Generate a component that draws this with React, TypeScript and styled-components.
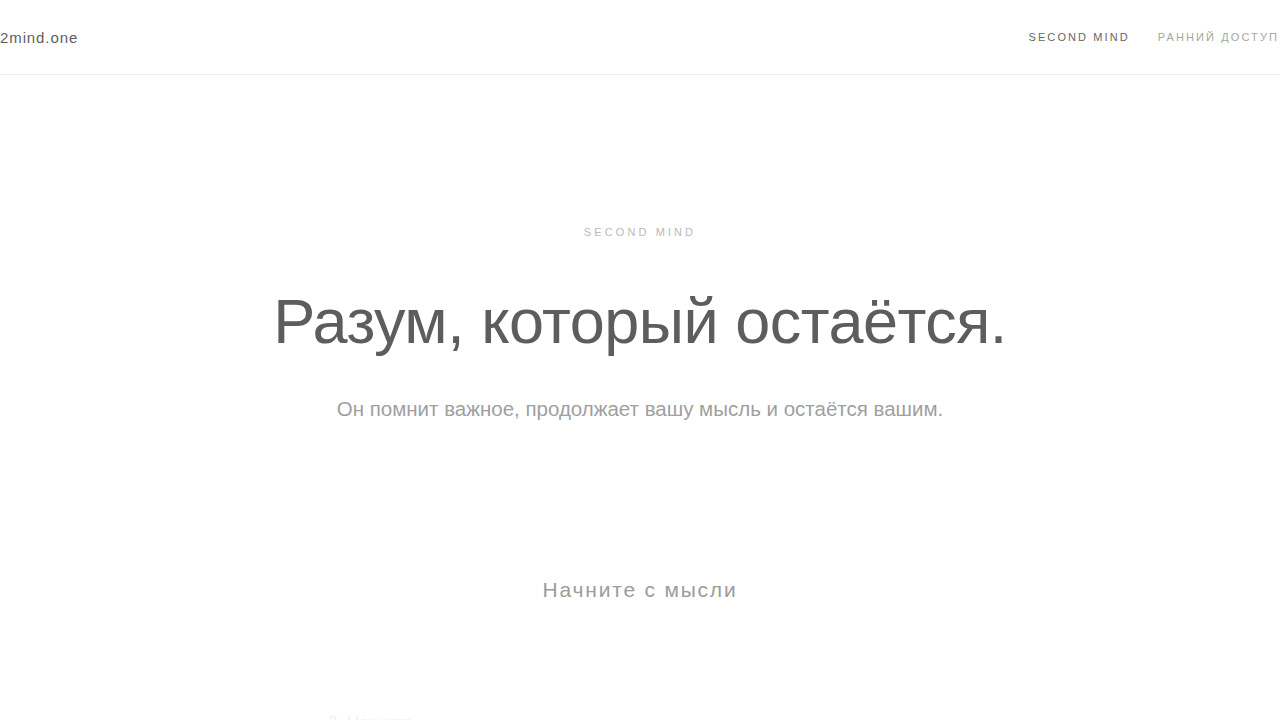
import React from "react";
import styled, { createGlobalStyle } from "styled-components";

const GlobalStyle = createGlobalStyle`
  html, body {
    margin: 0;
    padding: 0;
    background: #ffffff;
    font-family: "Liberation Sans", Arial, sans-serif;
    -webkit-font-smoothing: antialiased;
  }
  #root {
    min-height: 100vh;
  }
`;

const navItems = [
  { label: "SECOND MIND", muted: false },
  { label: "РАННИЙ ДОСТУП", muted: true },
];

const App: React.FC = () => {
  return (
    <>
      <GlobalStyle />
      <Page>
        <Header>
          <Logo href="#">2mind.one</Logo>
          <Nav>
            {navItems.map((item) => (
              <NavItem key={item.label} href="#" $muted={item.muted}>
                {item.label}
              </NavItem>
            ))}
          </Nav>
        </Header>

        <Hero>
          <Eyebrow>SECOND MIND</Eyebrow>
          <Headline>Разум, который остаётся.</Headline>
          <Lead>Он помнит важное, продолжает вашу мысль и остаётся вашим.</Lead>
        </Hero>

        <Start>
          <StartTitle>Начните с мысли</StartTitle>
          <Steps>
            <Step>2. Начните</Step>
          </Steps>
        </Start>
      </Page>
    </>
  );
};

export default App;

const Page = styled.div`
  width: 1280px;
  height: 720px;
  overflow: hidden;
  display: flex;
  flex-direction: column;
`;

const Header = styled.header`
  height: 75px;
  flex-shrink: 0;
  box-sizing: border-box;
  border-bottom: 1px solid #ececec;
  display: flex;
  align-items: center;
  justify-content: space-between;
  padding-bottom: 1px;
`;

const Logo = styled.a`
  font-size: 15px;
  letter-spacing: 0.9px;
  color: #5f5f5f;
  text-decoration: none;
  padding-top: 1px;
`;

const Nav = styled.nav`
  display: flex;
  align-items: center;
  gap: 30px;
  padding-right: 3px;
`;

const NavItem = styled.a<{ $muted: boolean }>`
  font-size: 11px;
  letter-spacing: 2.1px;
  color: ${({ $muted }) => ($muted ? "#a3a7a0" : "#666666")};
  text-decoration: none;
  margin-right: -2px;
  padding-top: 1px;
`;

const Hero = styled.section`
  display: flex;
  flex-direction: column;
  align-items: center;
  padding-top: 151px;
`;

const Eyebrow = styled.p`
  margin: 0;
  font-size: 11px;
  letter-spacing: 3.1px;
  color: #b9b9b9;
  line-height: 13px;
`;

const Headline = styled.h1`
  margin: 44px 0 0;
  font-size: 63px;
  font-weight: 400;
  line-height: 76px;
  letter-spacing: -0.5px;
  color: #5d5d5d;
`;

const Lead = styled.p`
  margin: 38px 0 0;
  font-size: 20.5px;
  line-height: 24px;
  color: #9f9f9f;
`;

const Start = styled.section`
  display: flex;
  flex-direction: column;
  align-items: center;
  padding-top: 156px;
`;

const StartTitle = styled.h2`
  margin: 0;
  font-size: 21px;
  font-weight: 400;
  line-height: 26px;
  letter-spacing: 1.8px;
  color: #9c9c9c;
`;

const Steps = styled.div`
  align-self: stretch;
  display: flex;
  padding: 110px 0 0 328px;
`;

const Step = styled.p`
  margin: 0;
  font-size: 17px;
  line-height: 20px;
  color: #f2f2f2;
`;
